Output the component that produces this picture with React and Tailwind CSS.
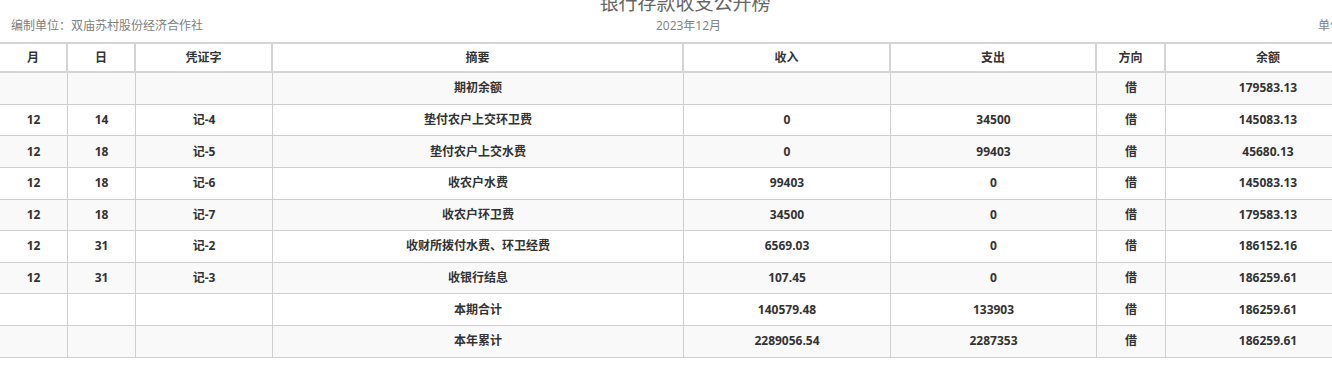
const cols = "grid grid-cols-[68px_68px_137px_411px_207px_206px_69px_204px]";

const heads = ["月", "日", "凭证字", "摘要", "收入", "支出", "方向", "余额"];

const rows = [
    ["", "", "", "期初余额", "", "", "借", "179583.13"],
    ["12", "14", "记-4", "垫付农户上交环卫费", "0", "34500", "借", "145083.13"],
    ["12", "18", "记-5", "垫付农户上交水费", "0", "99403", "借", "45680.13"],
    ["12", "18", "记-6", "收农户水费", "99403", "0", "借", "145083.13"],
    ["12", "18", "记-7", "收农户环卫费", "34500", "0", "借", "179583.13"],
    ["12", "31", "记-2", "收财所拨付水费、环卫经费", "6569.03", "0", "借", "186152.16"],
    ["12", "31", "记-3", "收银行结息", "107.45", "0", "借", "186259.61"],
    ["", "", "", "本期合计", "140579.48", "133903", "借", "186259.61"],
    ["", "", "", "本年累计", "2289056.54", "2287353", "借", "186259.61"],
];

export default function App() {
    return (
        <div
            className="w-[1332px] h-[374px] overflow-hidden bg-white"
            style={{ fontFamily: '"Open Sans", "Noto Sans CJK SC", sans-serif' }}
        >
            {/* page is scrolled a little, so the title is cut at the top */}
            <div className="w-[1370px] -mt-[10px]">
                <div className="h-[26px] leading-[26px] text-center text-[19px] text-[#666]">
                    银行存款收支公开榜
                </div>
                <div className="grid grid-cols-3 h-5 leading-5 text-[12px] text-[#808080] pl-[11px] pr-[4px]">
                    <span>编制单位：双庙苏村股份经济合作社</span>
                    <span className="text-center">2023年12月</span>
                    <span className="text-right">单位：元</span>
                </div>

                <div className="mt-[6px] text-[12px] font-bold text-[#333]">
                    <div className={`${cols} h-[31px] border-t-2 border-b-2 border-[#d4d4d4] bg-white`}>
                        {heads.map((h, i) => (
                            <div
                                key={h}
                                className={`flex items-center justify-center ${i < 7 ? "border-r-2 border-[#d4d4d4]" : ""}`}
                            >
                                {h}
                            </div>
                        ))}
                    </div>
                    {rows.map((r, ri) => (
                        <div
                            key={ri}
                            className={`${cols} h-[31.625px] border-b border-[#cfcfcf] ${ri % 2 === 0 ? "bg-[#f9f9f9]" : "bg-white"}`}
                        >
                            {r.map((c, ci) => (
                                <div
                                    key={ci}
                                    className={`flex items-center justify-center ${ci < 7 ? "border-r border-[#cfcfcf]" : ""}`}
                                >
                                    {c}
                                </div>
                            ))}
                        </div>
                    ))}
                </div>
            </div>
        </div>
    );
}
